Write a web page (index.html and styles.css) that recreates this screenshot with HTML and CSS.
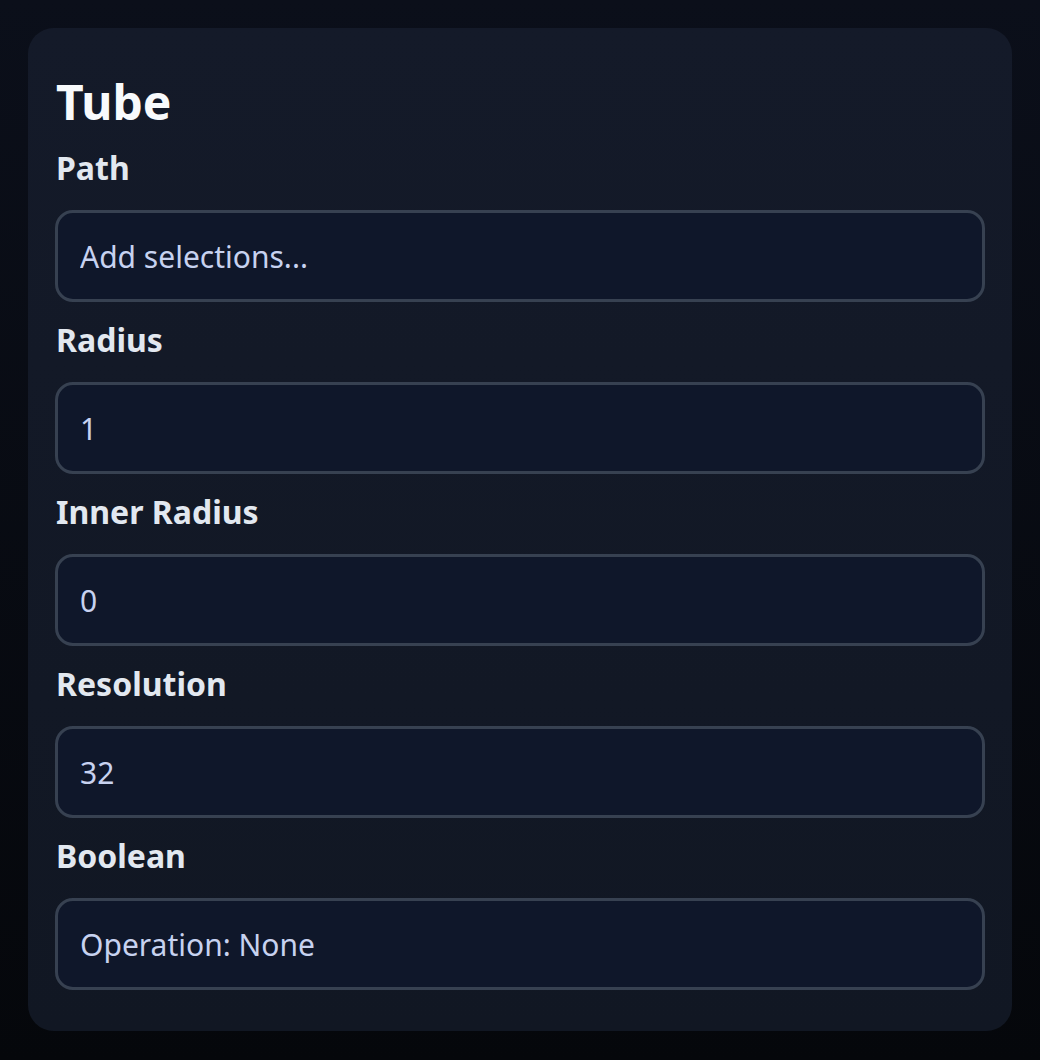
FILE: index.html
```html
<!DOCTYPE html>
<html lang="en">
<head>
    <meta charset="UTF-8">
    <meta name="viewport" content="width=device-width, initial-scale=1.0">
    <title>Tube</title>
    <link rel="stylesheet" href="styles.css">
</head>
<body>

<div class="panel">
    <h1>Tube</h1>

    <!-- Path -->
    <div class="field">
        <label for="path">Path</label>
        <input id="path" type="text" placeholder="Add selections...">
    </div>

    <!-- Radius -->
    <div class="field">
        <label for="radius">Radius</label>
        <input id="radius" type="text" value="1">
    </div>

    <div class="field">
        <label for="innerRadius">Inner Radius</label>
        <input id="innerRadius" type="text" value="0">
    </div>

    <div class="field">
        <label for="resolution">Resolution</label>
        <input id="resolution" type="text" value="32">
    </div>

    <!-- Boolean -->
    <div class="field">
        <label for="boolean">Boolean</label>
        <input id="boolean" type="text" value="Operation: None">
    </div>
</div>

</body>
</html>
```

FILE: styles.css
```css
html {
    height: 100%;
}
body {
    font-family: "Noto Sans", sans-serif;
    margin: 0;
    padding: 28px;
    min-height: 100%;
    box-sizing: border-box;
    background: linear-gradient(180deg, #0b0f1a 0%, #05070b 100%);
    color: #e2e8f0;
}
.panel {
    background: linear-gradient(180deg, #141a29 0%, #111723 100%);
    border-radius: 26px;
    padding: 27px 27px 23px;
}
h1 {
    margin: 19px 0 19px 1px;
    font-size: 48px;
    line-height: 55px;
    font-weight: 700;
    color: #f8fafc;
}
.field {
    margin-bottom: 18px;
}
.field label {
    display: block;
    font-size: 32px;
    line-height: 40px;
    font-weight: 700;
    color: #e2e8f0;
    margin: 0 0 22px 1px;
}
.field input {
    display: block;
    width: 100%;
    height: 92px;
    box-sizing: border-box;
    padding: 0 22px;
    background: #0f172a;
    border: 3px solid #374151;
    border-radius: 18px;
    font-family: "Noto Sans", sans-serif;
    font-size: 30px;
    color: #c7d2f0;
    outline: none;
}
.field input::placeholder {
    color: #c7d2f0;
    opacity: 1;
}
```
